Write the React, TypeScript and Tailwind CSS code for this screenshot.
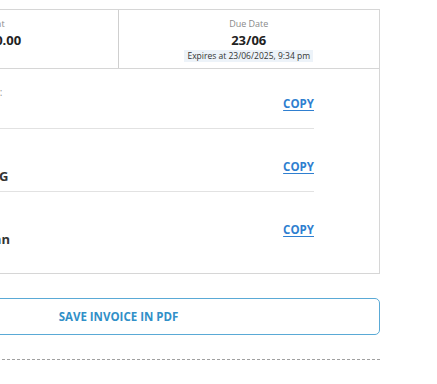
import React from 'react';

interface Row {
  label: string;
  value: string;
}

const rows: Row[] = [
  { label: 'Account number:', value: '8891023' },
  { label: 'SWIFT code', value: 'HSBCHKHHIG' },
  { label: 'Account holder', value: 'Chan Tai Man' },
];

const App: React.FC = () => {
  return (
    <div className="min-h-screen bg-white font-['Open_Sans',sans-serif] text-[#222]">
      <div className="ml-[-143px] w-[523px] pt-[9px]">
        <div className="border border-[#d6d6d6]">
          <div className="grid grid-cols-2 border-b border-[#d6d6d6]">
            <div className="flex flex-col items-center border-r border-[#cfcfcf] pt-2 pb-[6px]">
              <p className="text-[9px] leading-[12px] text-[#8a8a8a]">Amount</p>
              <p className="text-[13px] leading-[20px] font-bold">$12,500.00</p>
            </div>
            <div className="flex flex-col items-center pt-2 pb-[6px]">
              <p className="text-[9px] leading-[12px] text-[#8a8a8a]">Due Date</p>
              <p className="text-[13px] leading-[20px] font-bold">23/06</p>
              <span className="bg-[#edf3f9] px-[3px] text-[8.5px] leading-[12px] text-[#333]">
                Expires at 23/06/2025, 9:34 pm
              </span>
            </div>
          </div>
          <div className="pl-[64px] pr-[65px] pb-[19px]">
            {rows.map((row, i) => (
              <div
                key={row.label}
                className={`flex items-center justify-between pb-[5px] ${i === 0 ? 'pt-[16px]' : 'pt-[19px]'} ${
                  i < rows.length - 1 ? 'border-b border-[#e2e2e2]' : ''
                }`}
              >
                <div>
                  <p className="text-[10px] leading-[14px] text-[#999]">{row.label}</p>
                  <p className="mt-[4px] text-[13px] leading-[20px] font-bold text-[#333]">{row.value}</p>
                </div>
                <button className="text-[11.5px] font-bold text-[#2f7fd0] underline underline-offset-2">
                  COPY
                </button>
              </div>
            ))}
          </div>
        </div>

        <button className="mt-6 flex h-[37px] w-full items-center justify-center rounded-[5px] border-[length:1.5px] border-solid border-[color:#5aaad6] pt-[1px] text-[11.5px] font-bold text-[#3190c8]">
          SAVE INVOICE IN PDF
        </button>

        <div className="mt-6 border-t border-dashed border-[#a0a0a0]" />
      </div>
    </div>
  );
};

export default App;
